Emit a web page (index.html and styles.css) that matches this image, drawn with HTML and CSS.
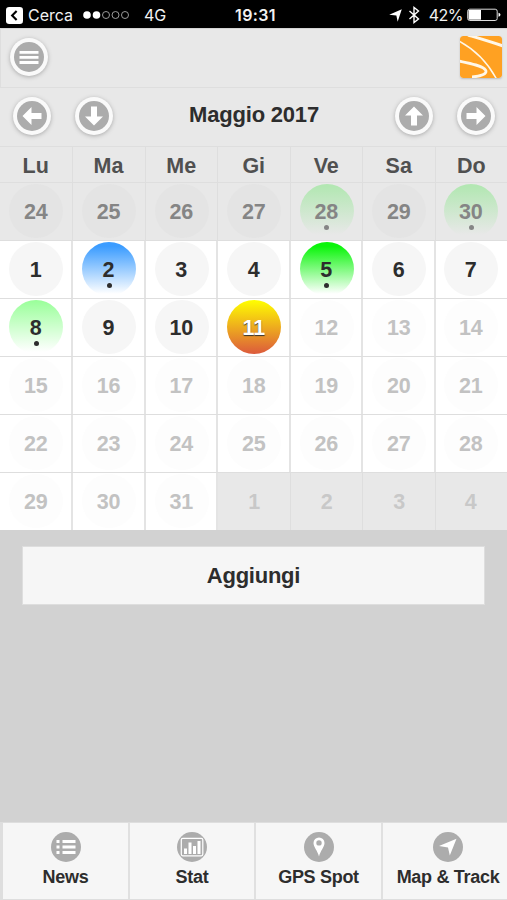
FILE: index.html
```html
<!DOCTYPE html>
<html lang="it">
<head>
<meta charset="utf-8">
<title>Maggio 2017</title>
<link rel="stylesheet" href="styles.css">
</head>
<body>
<div class="app">
  <div class="status">
    <div class="status-left">
      <svg class="back" viewBox="0 0 16 16"><rect width="16" height="16" rx="3"/><path d="M10 3.800 5.800 8l4.200 4.200"/></svg>
      <span class="cerca">Cerca</span>
      <svg class="signal" viewBox="0 0 48 10"><circle class="on" cx="5" cy="5" r="3.800"/><circle class="on" cx="14.500" cy="5" r="3.800"/><circle cx="24" cy="5" r="3.500"/><circle cx="33.500" cy="5" r="3.500"/><circle cx="43" cy="5" r="3.500"/></svg>
      <span class="network">4G</span>
    </div>
    <span class="clock">19:31</span>
    <div class="status-right">
      <svg class="locate" viewBox="0 0 12 12"><path d="M11.800.3 8 11.800 6.800 6 .2 5.300Z"/></svg>
      <svg class="bluetooth" viewBox="0 0 12 18"><path d="m1.500 5 9 8L6 16.500v-15L10.500 5l-9 8"/></svg>
      <span class="percent">42%</span>
      <svg class="battery" viewBox="0 0 34 14"><rect class="case" x=".7" y="1.200" width="29.500" height="11.300" rx="2"/><rect class="charge" x="1.500" y="2" width="12.500" height="9.700"/><path class="cap" d="M31.500 4.800q2 .5 2 2t-2 2Z"/></svg>
    </div>
  </div>

  <header class="header">
    <button class="round" aria-label="Menu"><svg viewBox="0 0 30 30"><path class="bars" d="M5.500 10.300h19M5.500 15.400h19M5.500 20.500h19"/></svg></button>
    <svg class="logo" viewBox="0 0 42 42"><rect width="42" height="42" rx="3"/><path class="wide" d="M8-1C18 2 30 5.500 43 10"/><path class="thin" d="M-1 5C14 13 28 27 36.500 43"/><path class="curve" d="M-1 25C9 27.500 22 29 25.500 34C28 38 20 40.500 12 41"/></svg>
  </header>

  <div class="month">
    <div class="pair">
      <button class="round" aria-label="Indietro"><svg viewBox="0 0 30 30"><path d="M5.500 15 14.500 6v6h10v6h-10v6Z"/></svg></button>
      <button class="round" aria-label="Giù"><svg viewBox="0 0 30 30"><path d="M15 24.500 6 15.500h6v-10h6v10h6Z"/></svg></button>
    </div>
    <h1>Maggio 2017</h1>
    <div class="pair">
      <button class="round" aria-label="Su"><svg viewBox="0 0 30 30"><path d="M15 5.500 24 14.500h-6v10h-6v-10H6Z"/></svg></button>
      <button class="round" aria-label="Avanti"><svg viewBox="0 0 30 30"><path d="M24.500 15 15.500 6v6h-10v6h10v6Z"/></svg></button>
    </div>
  </div>

  <div class="week names"><span>Lu</span><span>Ma</span><span>Me</span><span>Gi</span><span>Ve</span><span>Sa</span><span>Do</span></div>
  <div class="week days previous">
    <div><span class="day">24</span></div><div><span class="day">25</span></div><div><span class="day">26</span></div><div><span class="day">27</span></div><div><span class="day green event">28</span></div><div><span class="day">29</span></div><div><span class="day green event">30</span></div>
  </div>
  <div class="week days">
    <div><span class="day">1</span></div><div><span class="day blue event">2</span></div><div><span class="day">3</span></div><div><span class="day">4</span></div><div><span class="day green event">5</span></div><div><span class="day">6</span></div><div><span class="day">7</span></div>
  </div>
  <div class="week days">
    <div><span class="day mint event">8</span></div><div><span class="day">9</span></div><div><span class="day">10</span></div><div><span class="day today">11</span></div><div class="future"><span class="day">12</span></div><div class="future"><span class="day">13</span></div><div class="future"><span class="day">14</span></div>
  </div>
  <div class="week days">
    <div class="future"><span class="day">15</span></div><div class="future"><span class="day">16</span></div><div class="future"><span class="day">17</span></div><div class="future"><span class="day">18</span></div><div class="future"><span class="day">19</span></div><div class="future"><span class="day">20</span></div><div class="future"><span class="day">21</span></div>
  </div>
  <div class="week days">
    <div class="future"><span class="day">22</span></div><div class="future"><span class="day">23</span></div><div class="future"><span class="day">24</span></div><div class="future"><span class="day">25</span></div><div class="future"><span class="day">26</span></div><div class="future"><span class="day">27</span></div><div class="future"><span class="day">28</span></div>
  </div>
  <div class="week days last">
    <div class="future"><span class="day">29</span></div><div class="future"><span class="day">30</span></div><div class="future"><span class="day">31</span></div><div class="next"><span class="day">1</span></div><div class="next"><span class="day">2</span></div><div class="next"><span class="day">3</span></div><div class="next"><span class="day">4</span></div>
  </div>

  <main class="content"><button class="add">Aggiungi</button></main>

  <nav class="tabs">
    <a><svg viewBox="0 0 30 30"><circle cx="15" cy="15" r="15"/><path class="line" d="M5.500 9.500h3M11.500 9.500h13M5.500 15h3M11.500 15h13M5.500 20.500h3M11.500 20.500h13"/></svg><span>News</span></a>
    <a><svg viewBox="0 0 30 30"><circle cx="15" cy="15" r="15"/><rect class="frame" x="4.300" y="6.300" width="21.500" height="17.500" rx="1.500"/><path class="chart" d="M8.500 22v-5.500M13 22V10.500M17.500 22v-8M22 22V9"/></svg><span>Stat</span></a>
    <a><svg viewBox="0 0 30 30"><circle cx="15" cy="15" r="15"/><path class="fill" fill-rule="evenodd" d="M15 24.500C13.700 19 9.500 15 9.500 11a5.500 5.500 0 0 1 11 0c0 4-4.200 8-5.500 13.500ZM15 8.200a2.700 2.700 0 1 0 0 5.400a2.700 2.700 0 0 0 0-5.400Z"/></svg><span>GPS Spot</span></a>
    <a><svg viewBox="0 0 30 30"><circle cx="15" cy="15" r="15"/><path class="fill" d="M23.500 6.800 16.800 23.500 15 15.500 6 14Z"/></svg><span>Map &amp; Track</span></a>
  </nav>
</div>
</body>
</html>
```

FILE: styles.css
```css
* { box-sizing: border-box; }
body { margin: 0; font-family: "Liberation Sans", Arial, sans-serif; color: #2d2d2d; }
button { font: inherit; color: inherit; padding: 0; border: 0; }
svg { display: block; flex: none; }

.app { width: 507px; height: 900px; display: flex; flex-direction: column; background: #d2d2d2; overflow: hidden; }

.status { height: 28px; flex: none; display: grid; grid-template-columns: 1fr auto 1fr; align-items: center; padding: 1px 6px 0 6px; background: #000; color: #f2f2f2; font-family: Inter, sans-serif; font-size: 16px; line-height: 28px; }
.status-left, .status-right { display: flex; align-items: center; }
.status-right { justify-content: flex-end; }
.back { width: 17px; height: 17px; fill: #fff; }
.back path { fill: none; stroke: #000; stroke-width: 2; }
.cerca { width: 44px; margin-left: 5px; letter-spacing: 0; }
.signal { width: 48px; height: 10px; margin-left: 10px; fill: none; stroke: #aaa; stroke-width: .9; }
.signal .on { fill: #fff; stroke: none; }
.network { margin-left: 14px; }
.clock { margin-left: 4px; font-weight: 600; font-size: 16px; letter-spacing: .4px; }
.locate { width: 13px; height: 13px; fill: #fff; }
.bluetooth { width: 12px; height: 18px; margin-left: 6px; fill: none; stroke: #fff; stroke-width: 1.400; }
.percent { margin-left: 9px; font-size: 16px; letter-spacing: -.5px; }
.battery { width: 34px; height: 14px; margin-left: 4px; }
.case { fill: none; stroke: #ddd; stroke-width: 1; }
.charge, .cap { fill: #fff; }

.header { height: 60px; flex: none; display: flex; align-items: center; justify-content: space-between; padding: 0 5px 3px 9px; background: #e8e8e8; border-bottom: 1px solid #dedede; border-top: 1px solid #d4d4d4; border-left: 1px solid #dedede; }
.logo { width: 42px; height: 42px; border-radius: 3px; box-shadow: 0 1px 2px #bbb; fill: none; stroke: #fff7e8; }
.logo rect { fill: #ffa122; stroke: none; }
.wide { stroke-width: 3; }
.thin { stroke-width: 1.500; }
.curve { stroke-width: 2.800; }

.round { display: block; width: 38px; height: 38px; padding: 4px; border-radius: 50%; background: #fafafa; box-shadow: 0 1px 4px #aaa; }
.round svg { width: 30px; height: 30px; border-radius: 50%; background: #acacac; fill: #fff; }
.round .bars { stroke: #fff; stroke-width: 2.800; }

.month { height: 59px; flex: none; display: grid; grid-template-columns: 1fr auto 1fr; align-items: center; padding: 0 12px 0 13px; background: #e8e8e8; border-bottom: 1px solid #dedede; }
.pair { display: flex; gap: 24px; padding-bottom: 2px; }
.pair:last-child { justify-content: flex-end; }
.month h1 { margin: 0 0 5px; font-size: 22px; line-height: 26px; letter-spacing: -.2px; }

.week { display: grid; grid-template-columns: 72.500px 73px 72.500px 72.500px 72.500px 72.500px 1fr; flex: none; font-weight: bold; font-size: 21.500px; }
.names { height: 35px; background: #e8e8e8; color: #505050; }
.names span { line-height: 38px; text-align: center; border-right: 1px solid #dedede; }
.days { height: 58px; background: #fff; border-top: 1px solid #dedede; }
.days > div { display: flex; justify-content: center; align-items: center; padding: 0 0 2px 2px; border-right: 2px solid #e4e4e4; }
.days > div:last-child, .names span:last-child { border-right: 0; }
.days > div:last-child { padding-left: 0; }
.day { position: relative; width: 54px; height: 54px; border-radius: 50%; background: #f6f6f6; text-align: center; text-indent: -1px; line-height: 56px; letter-spacing: -.2px; }
.event::after { content: ""; position: absolute; left: 24.500px; top: 41px; width: 5px; height: 5px; border-radius: 50%; background: currentColor; }
.previous { background: #e8e8e8; color: #858585; }
.previous > div { padding: 0 0 1px 1px; border-right: 1px solid #dedede; }
.previous .day { background: #e4e4e4; }
.green { background: linear-gradient(#0bf50b 8%, #fff 96%); }
.previous .green { background: linear-gradient(#b3e7b3 5%, #e8e8e8 94%); }
.blue { background: linear-gradient(#3b9cff 8%, #fff 96%); }
.mint { background: linear-gradient(#99ff99, #fff 96%); }
.today { background: linear-gradient(#ffff00, #dc5a3c); color: #fff; text-shadow: 0 1px 1px #333; }
.future { color: #c2c2c2; }
.future .day { background: #fdfdfd; }
.next { background: #e8e8e8; color: #c8c8c8; }
.last .next { border-right: 1px solid #dedede; }
.next .day { background: transparent; }

.content { flex: 1; padding: 16px 22px; }
.add { display: block; width: 463px; height: 59px; background: #f6f6f6; border: 1px solid #dedede; font-weight: bold; font-size: 22px; letter-spacing: -.25px; }

.tabs { height: 78px; flex: none; display: grid; grid-template-columns: 127px 126px 127px 1fr; padding-left: 3px; background: #dedede; border-top: 1px solid #dedede; border-bottom: 1px solid #dedede; }
.tabs a { display: flex; flex-direction: column; align-items: center; padding-top: 9px; background: #f6f6f6; border-right: 2px solid #e0e0e0; }
.tabs a:last-child { border-right: 0; padding-left: 6px; }
.tabs svg { width: 30px; height: 30px; fill: #acacac; }
.tabs span { margin-top: 5px; font-size: 18px; line-height: 20px; font-weight: bold; letter-spacing: -.3px; white-space: nowrap; }
.tabs .fill { fill: #fff; }
.line { stroke: #fff; stroke-width: 2.800; }
.frame { fill: none; stroke: #fff; stroke-width: 1.200; }
.chart { stroke: #fff; stroke-width: 3; }
```
